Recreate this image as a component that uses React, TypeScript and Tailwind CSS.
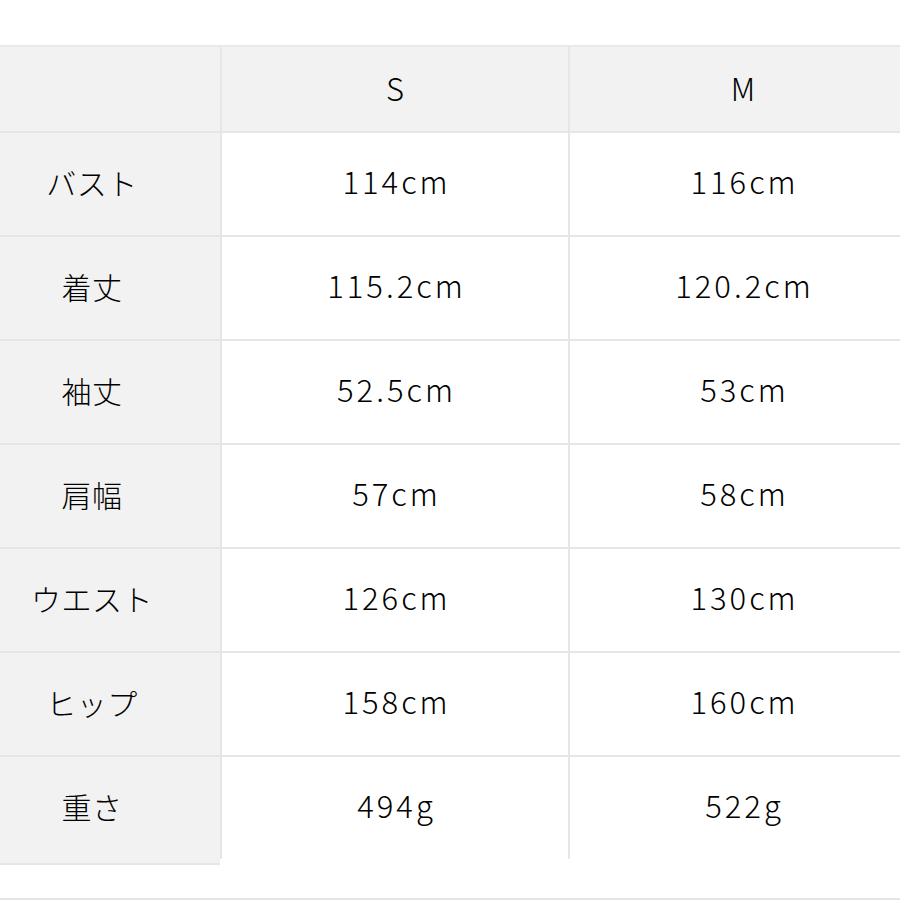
import React from "react";

const rows: [string, string, string][] = [
  ["バスト", "114cm", "116cm"],
  ["着丈", "115.2cm", "120.2cm"],
  ["袖丈", "52.5cm", "53cm"],
  ["肩幅", "57cm", "58cm"],
  ["ウエスト", "126cm", "130cm"],
  ["ヒップ", "158cm", "160cm"],
  ["重さ", "494g", "522g"],
];

export default function App() {
  return (
    <div
      className="w-[900px] h-[900px] bg-white overflow-hidden relative text-black font-light"
      style={{ fontFamily: '"Noto Sans CJK JP", "Noto Sans", sans-serif' }}
    >
      <div className="pt-[45px]">
        <div className="border-t-2 border-[#e9e9e9] w-[916px]">
          <div className="grid grid-cols-[220px_346px_346px] grid-rows-[84px_repeat(7,102px)] gap-[2px] bg-[#e6e6e6]">
            <div className="bg-[#f2f2f2]" />
            <div className="bg-[#f2f2f2] flex items-center justify-center text-[31px] pb-[2px]">S</div>
            <div className="bg-[#f2f2f2] flex items-center justify-center text-[31px] pb-[2px]">M</div>
            {rows.map(([label, s, m]) => (
              <React.Fragment key={label}>
                <div className="bg-[#f2f2f2] flex items-center justify-center pr-[36px] text-[30px] tracking-[0.5px] pb-[4px]">
                  {label}
                </div>
                <div className="bg-white flex items-center justify-center text-[31px] tracking-[3px] pb-[6px] pl-[3px]">
                  {s}
                </div>
                <div className="bg-white flex items-center justify-center text-[31px] tracking-[3px] pb-[6px] pl-[3px]">
                  {m}
                </div>
              </React.Fragment>
            ))}
          </div>
          <div className="flex">
            <div className="w-[220px] h-[6px] bg-[#f2f2f2] border-b-2 border-[#e6e6e6]" />
          </div>
        </div>
      </div>
      <div className="absolute left-0 right-0 bottom-0 h-[2px] bg-[#e4e4e4]" />
    </div>
  );
}
